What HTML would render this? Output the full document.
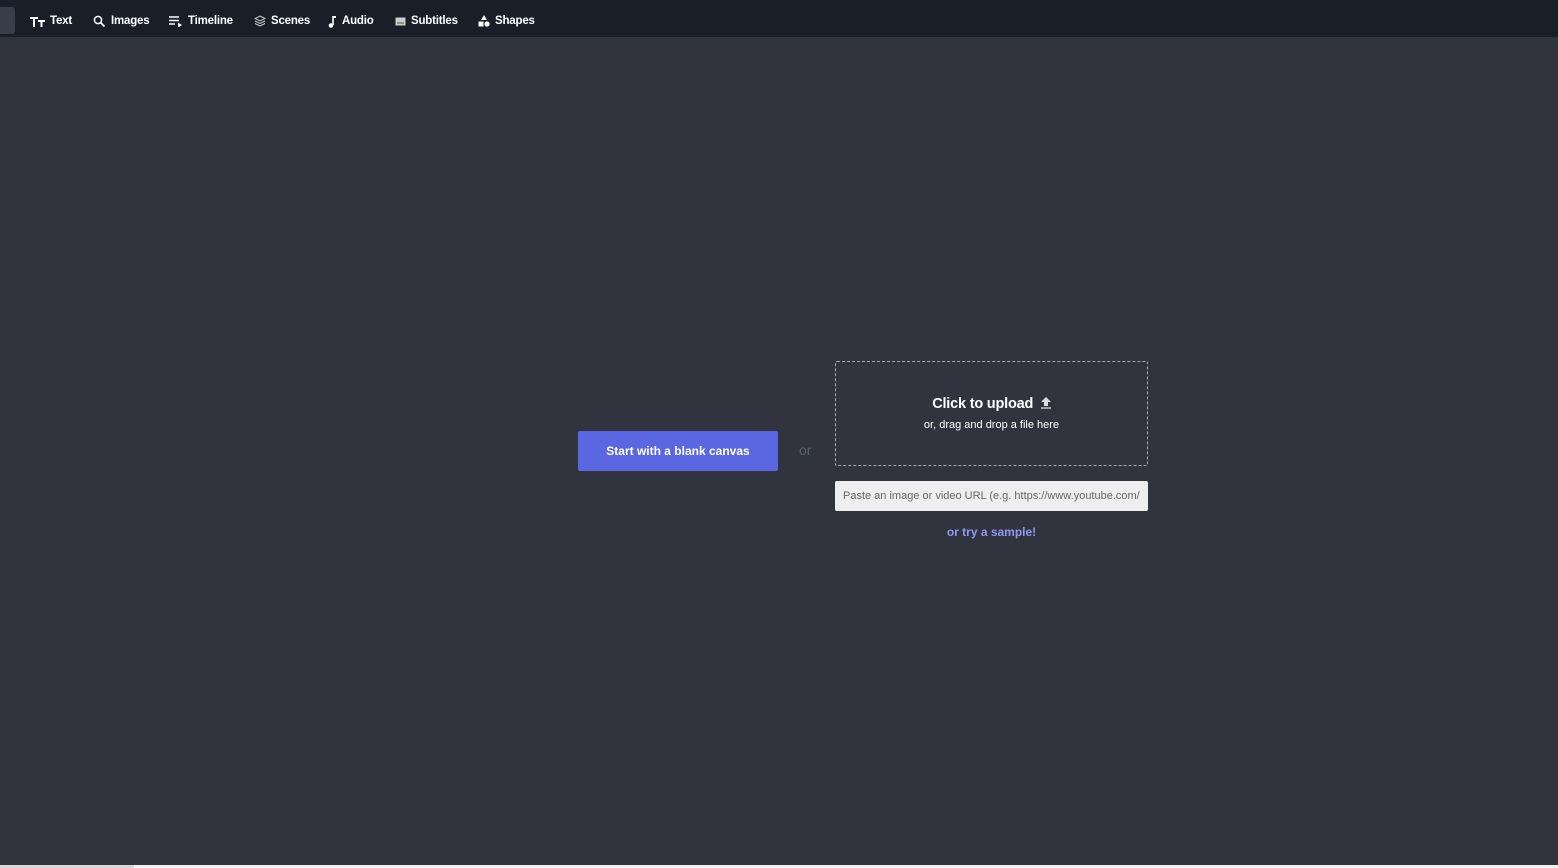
<!DOCTYPE html>
<html><head><meta charset="utf-8"><style>
*{margin:0;padding:0;box-sizing:border-box}
body{width:1558px;height:868px;background:#31343f;font-family:"Liberation Sans",sans-serif;position:relative;overflow:hidden}
.top{position:absolute;left:0;top:0;width:1558px;height:37px;background:#1a1e29}
.tab{position:absolute;left:0;top:7px;width:15px;height:27px;background:#3a3e4a;border-radius:0 3px 3px 0}
.it{position:absolute;top:13px;height:16px;color:#fff;font-size:11.5px;font-weight:bold;display:flex;align-items:center;gap:5px;letter-spacing:-0.2px}
.it svg{display:block}
.btn{position:absolute;left:578px;top:431px;width:200px;height:40px;background:#5a67e0;border-radius:2px;color:#fff;font-size:12px;font-weight:bold;text-align:center;line-height:40px}
.or{position:absolute;left:799px;top:442px;color:#5f6370;font-size:14px}
.drop{position:absolute;left:835px;top:361px;width:313px;height:105px;border:1.5px dashed rgba(190,190,195,0.85);border-radius:2px;text-align:center;color:#fff}
.drop .a{margin-top:34px;font-size:14.5px;font-weight:bold;letter-spacing:-0.2px}
.drop .b{margin-top:7px;font-size:11px}
.url{position:absolute;left:835px;top:481px;width:313px;height:30px;background:#eeeeee;border-radius:2px;color:#666;font-size:11px;line-height:30px;padding-left:8px;white-space:nowrap;overflow:hidden}
.samp{position:absolute;left:835px;top:525px;width:313px;text-align:center;color:#8f98f0;font-size:12px;font-weight:bold}
.bot{position:absolute;left:0;top:865px;width:1558px;height:3px;background:#f2f2f2}
.bot2{position:absolute;left:0;top:865px;width:134px;height:3px;background:#d8d8d8}
</style></head><body>
<div class="top"></div><div class="tab"></div>
<div class="it" style="left:30px"><svg width="15" height="11" viewBox="0 0 15 11"><path d="M0 1h8v2H5v8H3V3H0zM8 4h7v2h-2.5v5h-2V6H8z" fill="#fff"/></svg>Text</div>
<div class="it" style="left:93px"><svg width="13" height="13" viewBox="0 0 13 13"><circle cx="5" cy="5" r="3.6" fill="none" stroke="#fff" stroke-width="1.5"/><path d="M7.5 7.5l4 4" stroke="#fff" stroke-width="1.8"/></svg>Images</div>
<div class="it" style="left:169px"><svg width="14" height="11" viewBox="0 0 14 11"><path d="M0 1h10M0 4.5h10M0 8h6" stroke="#fff" stroke-width="1.4"/><path d="M9 6.5l4 2.5-4 2.5z" fill="#fff"/></svg>Timeline</div>
<div class="it" style="left:254px"><svg width="12" height="12" viewBox="0 0 12 12"><path d="M6 1L11 3.5 6 6 1 3.5z" fill="none" stroke="#ccc" stroke-width="1"/><path d="M1 6l5 2.5L11 6M1 8.5l5 2.5 5-2.5" fill="none" stroke="#ccc" stroke-width="1"/></svg>Scenes</div>
<div class="it" style="left:328px"><svg width="9" height="13" viewBox="0 0 9 13"><path d="M5 1v9" stroke="#fff" stroke-width="1.6"/><path d="M5 1h3v2H5z" fill="#fff"/><circle cx="3" cy="10.5" r="2.3" fill="#fff"/></svg>Audio</div>
<div class="it" style="left:395px"><svg width="11" height="9" viewBox="0 0 11 9"><rect x="0.5" y="0.5" width="10" height="8" fill="#ccc"/><path d="M2 6h7" stroke="#555" stroke-width="1"/></svg>Subtitles</div>
<div class="it" style="left:478px"><svg width="12" height="12" viewBox="0 0 12 12"><path d="M6 0l3 5H3z" fill="#fff"/><rect x="0.5" y="6.5" width="5" height="5" fill="#fff"/><circle cx="9" cy="9" r="2.6" fill="#fff"/></svg>Shapes</div>
<div class="btn">Start with a blank canvas</div>
<div class="or">or</div>
<div class="drop"><div class="a">Click to upload &nbsp;<svg width="10" height="12" viewBox="0 0 10 12" style="vertical-align:-1px"><path d="M5 0L10 5H7v4H3V5H0z" fill="#ddd"/><path d="M0 11h10" stroke="#ddd" stroke-width="1.3"/></svg></div><div class="b">or, drag and drop a file here</div></div>
<div class="url">Paste an image or video URL (e.g. https://www.youtube.com/</div>
<div class="samp">or try a sample!</div>
<div class="bot"></div><div class="bot2"></div>
</body></html>
